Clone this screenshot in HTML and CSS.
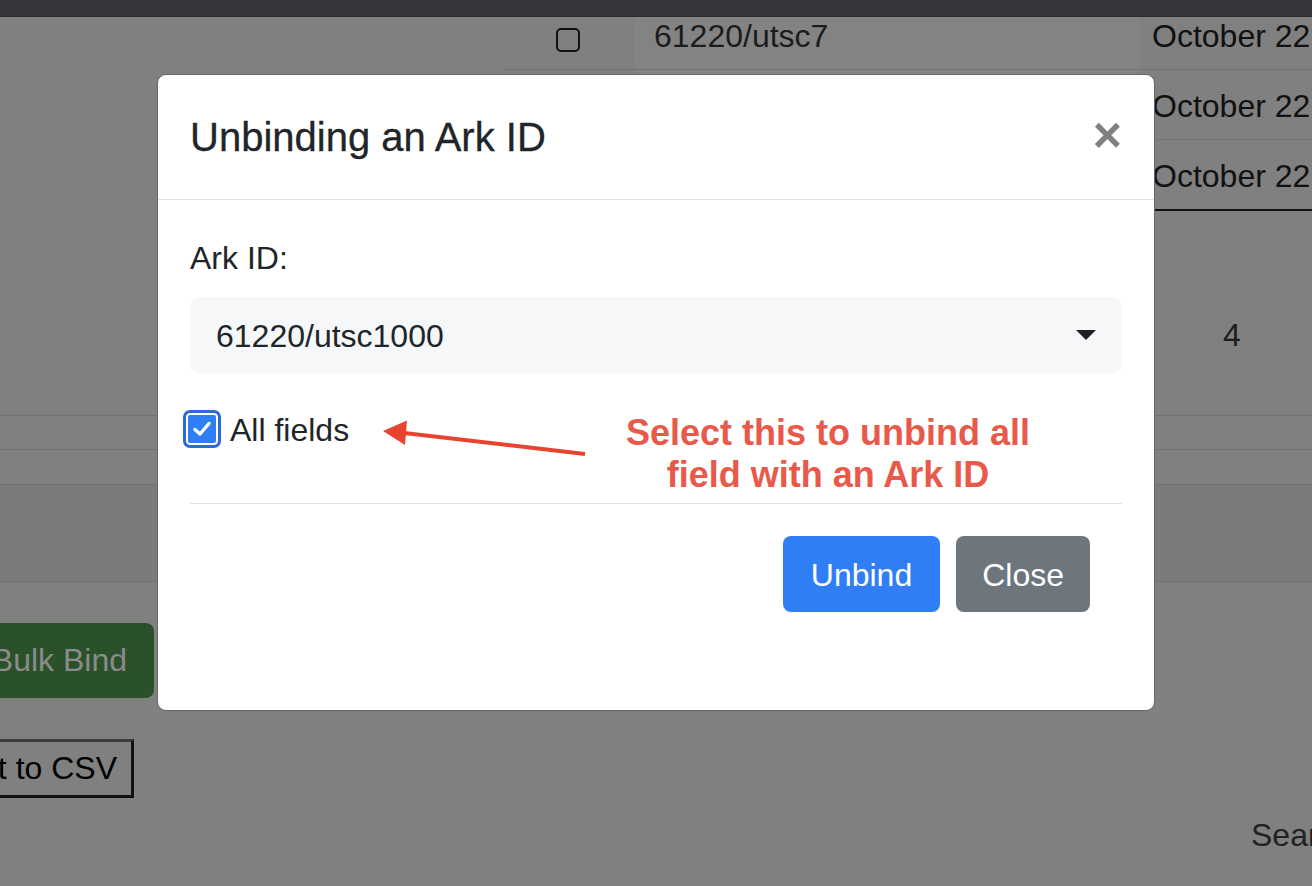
FILE: index.html
```html
<!DOCTYPE html>
<html lang="en">
<head>
<meta charset="utf-8">
<title>Unbinding an Ark ID</title>
<link rel="stylesheet" href="styles.css">
</head>
<body>
<div class="topbar"></div>
<main class="page">
  <div class="bg-table">
    <div class="cell first"></div>
    <div class="cell chk-col first lined"><span class="bg-check"></span></div>
    <div class="cell id-col first lined">61220/utsc7</div>
    <div class="cell date-col first lined">October 22, 2020</div>

    <div class="cell"></div>
    <div class="cell chk-col lined"><span class="bg-check"></span></div>
    <div class="cell id-col lined">61220/utsc8</div>
    <div class="cell date-col lined">October 22, 2020</div>

    <div class="cell"></div>
    <div class="cell chk-col last"><span class="bg-check"></span></div>
    <div class="cell id-col last">61220/utsc9</div>
    <div class="cell date-col last">October 22, 2020</div>
  </div>

  <div class="summary-row">
    <div class="summary-count">4</div>
  </div>
  <div class="foot-row short"></div>
  <div class="foot-row short2"></div>
  <div class="foot-row tall"></div>

  <div class="actions">
    <div class="clip clip-bulk"><button class="bulk-btn" type="button">Bulk Bind</button></div>
    <div class="clip clip-csv"><button class="csv-btn" type="button">Export to CSV</button></div>
  </div>
  <div class="search-row">Search:</div>
</main>

<div class="modal" role="dialog" aria-labelledby="modal-title">
  <div class="modal-header">
    <h5 class="modal-title" id="modal-title">Unbinding an Ark ID</h5>
    <button class="close" type="button" aria-label="Close">&times;</button>
  </div>
  <div class="modal-body">
    <div class="form-group">
      <label class="label">Ark ID:</label>
      <div class="select">
        <span>61220/utsc1000</span>
        <svg class="caret" width="20" height="10" viewBox="0 0 20 10"><path d="M0 0 H20 L10 10 Z" fill="#1d1f22"/></svg>
      </div>
    </div>
    <div class="check-row">
      <span class="checkbox">
        <svg width="18" height="16" viewBox="0 0 18 16"><path d="M2 8.5 L7 13 L16 2.5" fill="none" stroke="#fff" stroke-width="3.4" stroke-linecap="round" stroke-linejoin="round"/></svg>
      </span>
      <span class="check-label">All fields</span>
    </div>
    <div class="modal-footer">
      <button class="btn btn-primary" type="button">Unbind</button>
      <button class="btn btn-secondary" type="button">Close</button>
    </div>
  </div>
</div>

<svg class="annot-arrow" width="1312" height="886" viewBox="0 0 1312 886">
  <line x1="585" y1="454" x2="400" y2="432.5" stroke="#e8432f" stroke-width="4"/>
  <polygon points="383,431 407,420.5 405,445" fill="#e8432f"/>
</svg>
<div class="annot-text">Select this to unbind all<br>field with an Ark ID</div>
</body>
</html>
```

FILE: styles.css
```css
html, body {
  margin: 0;
  padding: 0;
  width: 1312px;
  height: 886px;
  overflow: hidden;
}
body {
  background: #808080;
  font-family: "Liberation Sans", Arial, sans-serif;
  color: #1c1c1c;
  position: relative;
}
.topbar {
  height: 16px;
  background: #35363a;
  border-bottom: 1px solid #28292c;
}
.page {
  display: flex;
  flex-direction: column;
}
.bg-table {
  display: grid;
  grid-template-columns: 504px 130px 506px 184px;
  grid-template-rows: 53px 70px 71px;
}
.cell {
  font-size: 32px;
  line-height: 38px;
  white-space: nowrap;
  overflow: hidden;
  padding-top: 17px;
}
.cell.first { padding-top: 0; }
.lined { border-bottom: 1px solid #737373; }
.last { border-bottom: 2px solid #111; }
.chk-col { padding-left: 52px; padding-top: 28px; }
.first.chk-col { padding-top: 11px; }
.bg-check {
  display: block;
  width: 20px;
  height: 20px;
  border: 2px solid #111;
  border-radius: 5px;
}
.id-col {
  background: #838383;
  padding-left: 20px;
}
.date-col {
  padding-left: 12px;
  color: #111;
}
.summary-row {
  height: 204px;
  border-bottom: 1px solid #717171;
  display: grid;
  grid-template-columns: 1140px 184px;
}
.summary-count {
  grid-column: 2;
  text-align: center;
  font-size: 32px;
  line-height: 48px;
  padding-top: 100px;
}
.foot-row { border-bottom: 1px solid #717171; }
.foot-row.short { height: 33px; }
.foot-row.short2 { height: 34px; }
.foot-row.tall { height: 96px; background: #7b7b7b; }

.actions {
  display: flex;
  flex-direction: column;
  gap: 41px;
  margin-top: 41px;
}
.clip {
  display: flex;
  justify-content: flex-end;
  overflow: hidden;
}
.clip-bulk { width: 154px; }
.clip-csv { width: 134px; }
.bulk-btn {
  flex: none;
  height: 75px;
  padding: 0 27px 0 24px;
  background: #2a5129;
  color: #8b8b8b;
  border: none;
  border-radius: 8px;
  font-family: "Liberation Sans", Arial, sans-serif;
  font-size: 32px;
  white-space: nowrap;
}
.csv-btn {
  flex: none;
  height: 59px;
  padding: 0 14px 0 10px;
  background: #808080;
  color: #000;
  border: 3px solid #111;
  border-top-color: #3d3d3d;
  border-left-color: #3d3d3d;
  font-family: "Liberation Sans", Arial, sans-serif;
  font-size: 32px;
  white-space: nowrap;
}
.search-row {
  margin-top: 13px;
  padding-left: 1251px;
  font-size: 32px;
  line-height: 48px;
  color: #222;
  white-space: nowrap;
}

/* Modal */
.modal {
  position: absolute;
  left: 157px;
  top: 74px;
  width: 996px;
  background: #fff;
  border: 1px solid #676767;
  border-radius: 9px;
  color: #212529;
}
.modal-header {
  display: flex;
  align-items: flex-start;
  padding: 32px;
  border-bottom: 1px solid #dee2e6;
}
.modal-title {
  margin: 0;
  font-size: 40px;
  line-height: 60px;
  font-weight: 500;
  -webkit-text-stroke: 0.3px #212529;
}
.close {
  margin-left: auto;
  padding: 0;
  border: none;
  background: none;
  font-family: "Liberation Sans", Arial, sans-serif;
  font-size: 50px;
  line-height: 56px;
  font-weight: 700;
  color: #808080;
}
.modal-body {
  padding: 33px 32px 66px;
}
.form-group {
  display: flex;
  flex-direction: column;
  margin-bottom: 32px;
}
.label {
  font-size: 32px;
  line-height: 50px;
  margin-bottom: 14px;
}
.select {
  height: 76px;
  box-sizing: border-box;
  padding: 2px 26px 0;
  background: #f6f7f9;
  border-radius: 9px;
  display: flex;
  align-items: center;
  justify-content: space-between;
  font-size: 32px;
}
.caret { margin-top: -2px; }
.check-row {
  display: flex;
  align-items: center;
  height: 48px;
  margin-left: -7px;
  margin-bottom: 50px;
  gap: 9px;
}
.checkbox {
  width: 38px;
  height: 38px;
  box-sizing: border-box;
  border: 3px solid #2a6bd8;
  border-radius: 7px;
  background: #2f7ef6;
  box-shadow: inset 0 0 0 2px #fff;
  display: flex;
  align-items: center;
  justify-content: center;
}
.check-label {
  font-size: 32px;
  line-height: 48px;
  padding-top: 2px;
}
.modal-footer {
  display: flex;
  justify-content: flex-end;
  gap: 16px;
  padding: 32px;
  border-top: 1px solid #dee2e6;
}
.btn {
  height: 76px;
  padding: 2px 27px 0;
  border: none;
  border-radius: 8px;
  font-family: "Liberation Sans", Arial, sans-serif;
  font-size: 32px;
  color: #fff;
}
.btn-primary { background: #2f7ef6; padding: 2px 28px 0; }
.btn-secondary { background: #6d757d; padding: 2px 26px 0; }

/* Annotation */
.annot-arrow {
  position: absolute;
  left: 0;
  top: 0;
  pointer-events: none;
}
.annot-text {
  position: absolute;
  left: 578px;
  top: 412px;
  width: 500px;
  text-align: center;
  font-family: "Liberation Sans", Arial, sans-serif;
  font-weight: 700;
  font-size: 36px;
  line-height: 42px;
  color: #e9594a;
}
```
